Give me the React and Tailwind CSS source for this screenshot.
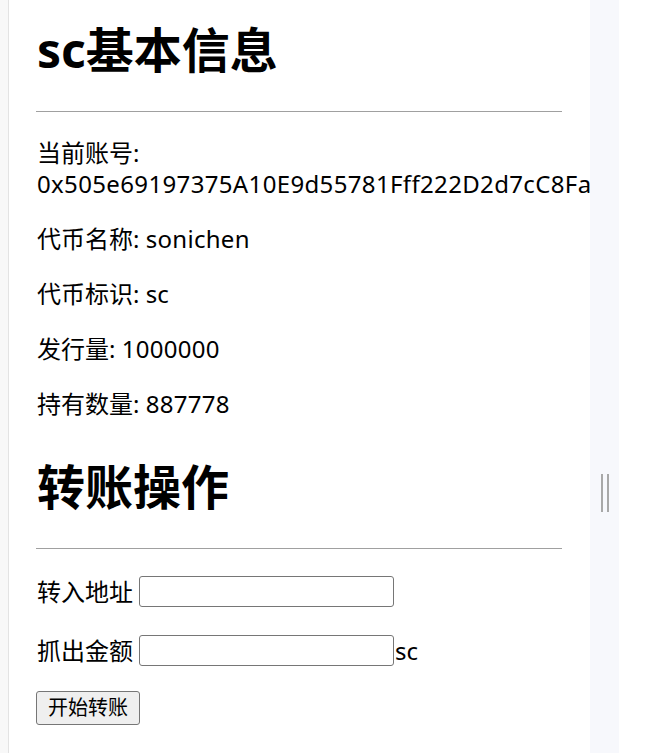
export default function App() {
  return (
    <div className="flex min-h-[753px] bg-white text-black font-['Noto_Sans','Noto_Sans_CJK_SC',sans-serif]">
      <div className="w-[9px] shrink-0 bg-[#f8f8f8] border-r border-[#e3e3e3]"></div>
      <div className="w-[581px] shrink-0 pl-[28px] pr-[28px] text-[24px] leading-[31px]">
        <h1 className="mt-[18px] text-[48px] leading-[64px] font-bold">sc基本信息</h1>
        <hr className="mt-[29px] -ml-px border-t border-[#a0a0a0]" />
        <p className="mt-[25px]">
          当前账号:
          <br />
          <span className="whitespace-nowrap tracking-[0.35px]">0x505e69197375A10E9d55781Fff222D2d7cC8Fa</span>
        </p>
        <p className="mt-[24px]">代币名称: <span className="tracking-[0.3px]">sonichen</span></p>
        <p className="mt-[24px]">代币标识: sc</p>
        <p className="mt-[24px]">发行量: <span className="tracking-[0.3px]">1000000</span></p>
        <p className="mt-[24px]">持有数量: <span className="tracking-[0.3px]">887778</span></p>
        <h2 className="mt-[36px] text-[48px] leading-[64px] font-bold">转账操作</h2>
        <hr className="mt-[29px] -ml-px border-t border-[#a0a0a0]" />
        <div className="mt-[27px] flex items-center">
          <span>转入地址</span>
          <input type="text" className="ml-[6px] w-[255px] h-[31px] border border-[#767676] rounded-[3px] bg-white px-1" />
        </div>
        <div className="mt-[28px] flex items-center">
          <span>抓出金额</span>
          <input type="text" className="ml-[6px] w-[255px] h-[31px] border border-[#767676] rounded-[3px] bg-white px-1" />
          <span className="ml-px">sc</span>
        </div>
        <button className="mt-[25px] -ml-px w-[104px] h-[34px] border border-[#767676] rounded-[3px] bg-[#efefef] text-[20px] leading-[28px]">
          开始转账
        </button>
      </div>
      <div className="w-[29px] shrink-0 bg-[#f7f8fc] flex items-center justify-center">
        <div className="flex gap-[4px] mt-[232px]">
          <div className="w-[2px] h-[38px] bg-[#a8a8a8]"></div>
          <div className="w-[2px] h-[38px] bg-[#a8a8a8]"></div>
        </div>
      </div>
      <div className="flex-1"></div>
    </div>
  );
}
